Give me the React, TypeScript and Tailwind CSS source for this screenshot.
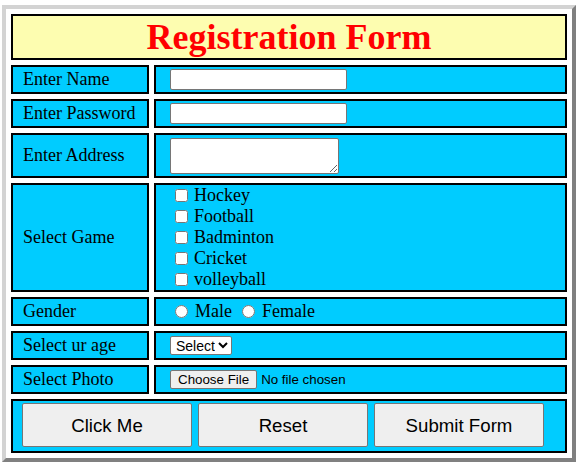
import React from 'react';

const cell = 'border-2 border-black bg-[#00ccff] p-0 align-middle';
const label = `${cell} w-[138px] pl-[10px] text-[18px] leading-[21px] text-left`;
const field = `${cell} w-[413px] pl-[14px] leading-[21px]`;
const ctrl = "font-['Liberation_Sans',Arial,sans-serif] text-[13.33px] leading-[normal] text-black";

const games = ['Hockey', 'Football', 'Badminton', 'Cricket', 'volleyball'];

const App: React.FC = () => {
  return (
    <div className="w-[587px] h-[467px] bg-white font-['Liberation_Serif','Times_New_Roman',serif] text-black leading-[21px]">
      <table className="ml-[2px] mt-[5px] w-[574px] border-separate border-spacing-[5px] border-4 border-t-[#d3d3d3] border-l-[#d3d3d3] border-r-[#808080] border-b-[#808080] bg-white">
        <tbody>
          <tr className="h-[46px]">
            <td colSpan={2} className="h-[46px] border-2 border-black bg-[#fdfdb0] p-0 text-center align-middle">
              <h1 className="text-[36px] font-bold leading-[40px] text-[#ff0000]">Registration Form</h1>
            </td>
          </tr>
          <tr className="h-[29px]">
            <td className={label}>Enter Name</td>
            <td className={field}>
              <input type="text" className={`${ctrl} block w-[177px] h-[21px] px-[2px] border border-[#767676] rounded-[2px] bg-white`} />
            </td>
          </tr>
          <tr className="h-[29px]">
            <td className={label}>Enter Password</td>
            <td className={field}>
              <input type="password" className={`${ctrl} block w-[177px] h-[21px] px-[2px] border border-[#767676] rounded-[2px] bg-white`} />
            </td>
          </tr>
          <tr className="h-[45px]">
            <td className={label}>Enter Address</td>
            <td className={field}>
              <textarea className="block w-[169px] h-[36px] border border-[#767676] rounded-[2px] bg-white resize font-['Liberation_Mono',monospace] text-[13.33px]" />
            </td>
          </tr>
          <tr className="h-[109px]">
            <td className={label}>Select Game</td>
            <td className={field}>
              {games.map((g) => (
                <div key={g} className="flex h-[21px] items-center text-[18px]">
                  <input type="checkbox" className="ml-[5px] mr-[6px] h-[13px] w-[13px]" />
                  <span>{g}</span>
                </div>
              ))}
            </td>
          </tr>
          <tr className="h-[29px]">
            <td className={label}>Gender</td>
            <td className={field}>
              <div className="flex h-[21px] items-center text-[18px]">
                <input type="radio" name="gender" className="ml-[5px] mr-[7px] h-[13px] w-[13px]" />
                <span>Male</span>
                <input type="radio" name="gender" className="ml-[10px] mr-[7px] h-[13px] w-[13px]" />
                <span>Female</span>
              </div>
            </td>
          </tr>
          <tr className="h-[29px]">
            <td className={label}>Select ur age</td>
            <td className={field}>
              <select className="block h-[19px] pl-[1px] border border-[#767676] rounded-[2px] bg-white font-['Liberation_Sans',Arial,sans-serif] text-[14px] leading-[normal] text-black">
                <option>Select</option>
                <option>18</option>
                <option>19</option>
                <option>20</option>
              </select>
            </td>
          </tr>
          <tr className="h-[29px]">
            <td className={label}>Select Photo</td>
            <td className={field}>
              <input
                type="file"
                className={`${ctrl} block file:mr-[4px] file:h-[19px] file:px-[7px] file:border file:border-[#767676] file:rounded-[2px] file:bg-[#efefef] file:text-[13.33px]`}
              />
            </td>
          </tr>
          <tr className="h-[54px]">
            <td colSpan={2} className="border-2 border-black bg-[#00ccff] p-0 align-top">
              <div className="flex gap-[6px] pl-[9px] pt-[2px]">
                {['Click Me', 'Reset', 'Submit Form'].map((b) => (
                  <button
                    key={b}
                    type="button"
                    className="w-[170px] h-[44px] border border-[#767676] rounded-[2px] bg-[#efefef] text-black font-['Liberation_Sans',Arial,sans-serif] text-[18.67px]"
                  >
                    {b}
                  </button>
                ))}
              </div>
            </td>
          </tr>
        </tbody>
      </table>
    </div>
  );
};

export default App;
